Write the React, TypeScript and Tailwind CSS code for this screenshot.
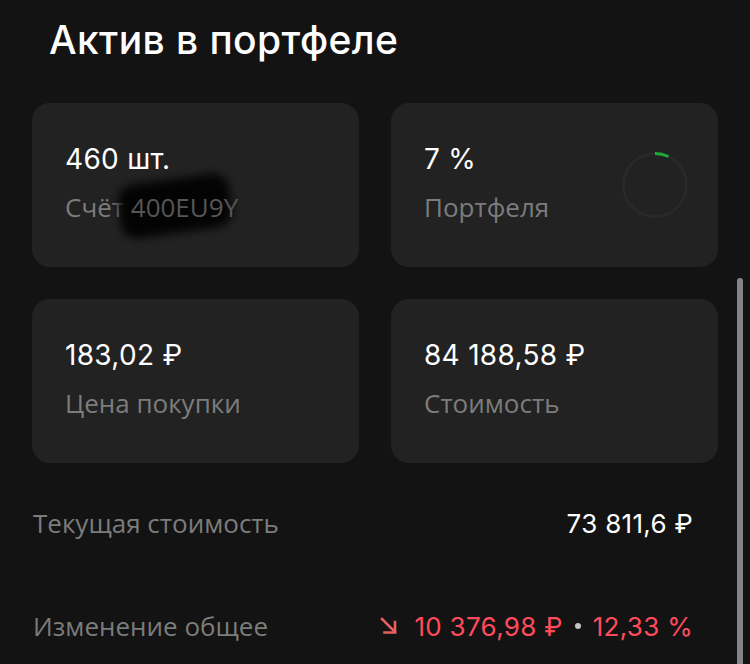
import React from 'react';

const cards = [
  { id: 'qty', value: '460 шт.', label: 'Счёт', account: '400EU9Y' },
  { id: 'share', value: '7 %', label: 'Портфеля', ring: 7 },
  { id: 'buy', value: '183,02 ₽', label: 'Цена покупки' },
  { id: 'cost', value: '84 188,58 ₽', label: 'Стоимость' },
];

const valueFont = { fontFamily: 'Inter, "Noto Sans", sans-serif' };
const labelFont = { fontFamily: '"Open Sans", "Noto Sans", sans-serif' };

function Ring({ percent }: { percent: number }) {
  const r = 31.5;
  const c = 2 * Math.PI * r;
  return (
    <svg width="66" height="66" viewBox="0 0 66 66">
      <circle cx="33" cy="33" r={r} fill="none" stroke="#2a2a2a" strokeWidth="2.5" />
      <circle
        cx="33"
        cy="33"
        r={r}
        fill="none"
        stroke="#1ea93b"
        strokeWidth="3"
        strokeDasharray={`${(c * percent) / 100} ${c}`}
        transform="rotate(-90 33 33)"
      />
    </svg>
  );
}

function ArrowDownRight() {
  return (
    <svg width="18" height="18" viewBox="0 0 18 18" fill="none" stroke="#e8605f" strokeWidth="2.6" strokeLinecap="square">
      <path d="M2 2 L15 15" />
      <path d="M15 5 V15.5 H4.5" />
    </svg>
  );
}

export default function App() {
  return (
    <div className="relative h-[664px] w-[750px] overflow-hidden bg-[#131313] text-white">
      <h1
        className="pl-[49px] pt-[16px] text-[39px] font-medium leading-[48px] tracking-[0.4px]"
        style={valueFont}
      >
        Актив в портфеле
      </h1>

      {/* Cards */}
      <div className="mt-[39px] grid grid-cols-2 gap-8 px-8">
        {cards.map((card) => (
          <div
            key={card.id}
            className="flex h-[164px] items-center justify-between rounded-[18px] bg-[#222222] pl-[33px] pr-[30px]"
          >
            <div className="-mt-[6px] flex flex-col">
              <span className="text-[28px] font-normal leading-[34px] tracking-[0.3px]" style={valueFont}>
                {card.value}
              </span>
              <span
                className="relative mt-[15px] text-[26px] leading-[32px] text-[#7c7c7c]"
                style={labelFont}
              >
                {card.label}
                {card.account && (
                  <>
                    <span className="absolute left-[54px] top-[-12px] h-[54px] w-[112px] -rotate-[8deg] rounded-[16px] bg-black/90 blur-[5px]" />
                    <span className="relative text-[#555555]"> {card.account}</span>
                  </>
                )}
              </span>
            </div>
            {card.ring !== undefined && <Ring percent={card.ring} />}
          </div>
        ))}
      </div>

      {/* Rows */}
      <div className="mt-[34px] flex flex-col pl-[33px] pr-[57px]">
        <div className="flex h-[52px] items-center justify-between">
          <span className="text-[26px] text-[#7c7c7c]" style={labelFont}>
            Текущая стоимость
          </span>
          <span className="text-[26px] font-normal tracking-[0.3px]" style={valueFont}>
            73 811,6 ₽
          </span>
        </div>
        <div className="mt-[51px] flex h-[52px] items-center justify-between">
          <span className="text-[26px] text-[#7c7c7c]" style={labelFont}>
            Изменение общее
          </span>
          <span className="flex items-center text-[26px] font-normal tracking-[0.3px] text-[#ff4b5c]" style={valueFont}>
            <span className="mr-[16px] flex">
              <ArrowDownRight />
            </span>
            10 376,98 ₽
            <span className="mx-[12px] h-[6px] w-[6px] rounded-full bg-[#c4c4c4]" />
            12,33 %
          </span>
        </div>
      </div>

      {/* Scroll indicator */}
      <div className="absolute right-[7px] top-[278px] h-[400px] w-[6px] rounded-full bg-[#858585]" />
    </div>
  );
}
